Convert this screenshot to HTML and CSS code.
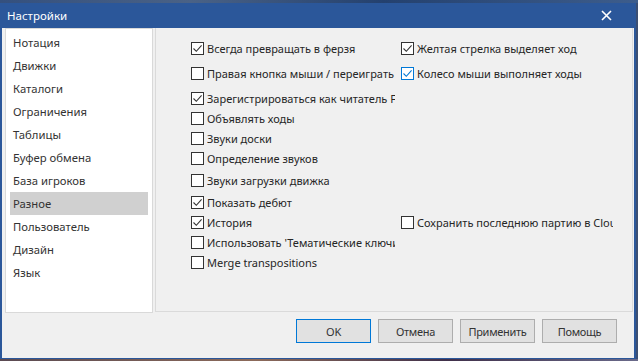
FILE: index.html
```html
<!DOCTYPE html>
<html lang="ru">
<head>
<meta charset="utf-8">
<title>Настройки</title>
<link rel="stylesheet" href="styles.css">
</head>
<body>
<div class="desk-top"></div>
<div class="window">
  <div class="titlebar">
    <span class="title">Настройки</span>
    <svg class="close" width="11" height="11" viewBox="0 0 11 11"><path d="M1 1L10 10M10 1L1 10" stroke="#fff" stroke-width="1.6"/></svg>
  </div>
  <div class="main">
    <ul class="nav">
      <li>Нотация</li>
      <li>Движки</li>
      <li>Каталоги</li>
      <li>Ограничения</li>
      <li>Таблицы</li>
      <li>Буфер обмена</li>
      <li>База игроков</li>
      <li class="sel">Разное</li>
      <li>Пользователь</li>
      <li>Дизайн</li>
      <li>Язык</li>
    </ul>
    <div class="panel">
      <div class="row first">
        <label class="cb on"><span class="box"><svg viewBox="0 0 11 11"><path d="M1.5 5.5L4.3 8.3L9.6 2.4" fill="none" stroke="#333" stroke-width="1.1"/></svg></span><span class="txt">Всегда превращать в ферзя</span></label>
        <label class="cb on c2"><span class="box"><svg viewBox="0 0 11 11"><path d="M1.5 5.5L4.3 8.3L9.6 2.4" fill="none" stroke="#333" stroke-width="1.1"/></svg></span><span class="txt">Желтая стрелка выделяет ход</span></label>
      </div>
      <div class="row g6">
        <label class="cb"><span class="box"></span><span class="txt">Правая кнопка мыши / переиграть</span></label>
        <label class="cb on c2 focus"><span class="box"><svg viewBox="0 0 11 11"><path d="M1.5 5.5L4.3 8.3L9.6 2.4" fill="none" stroke="#0078d7" stroke-width="1.1"/></svg></span><span class="txt">Колесо мыши выполняет ходы</span></label>
      </div>
      <div class="row g6">
        <label class="cb on"><span class="box"><svg viewBox="0 0 11 11"><path d="M1.5 5.5L4.3 8.3L9.6 2.4" fill="none" stroke="#333" stroke-width="1.1"/></svg></span><span class="txt">Зарегистрироваться как читатель Fritz</span></label>
      </div>
      <div class="row g1">
        <label class="cb"><span class="box"></span><span class="txt">Объявлять ходы</span></label>
      </div>
      <div class="row">
        <label class="cb"><span class="box"></span><span class="txt">Звуки доски</span></label>
      </div>
      <div class="row g1">
        <label class="cb"><span class="box"></span><span class="txt">Определение звуков</span></label>
      </div>
      <div class="row g3">
        <label class="cb"><span class="box"></span><span class="txt">Звуки загрузки движка</span></label>
      </div>
      <div class="row g3">
        <label class="cb on"><span class="box"><svg viewBox="0 0 11 11"><path d="M1.5 5.5L4.3 8.3L9.6 2.4" fill="none" stroke="#333" stroke-width="1.1"/></svg></span><span class="txt">Показать дебют</span></label>
      </div>
      <div class="row g1">
        <label class="cb on"><span class="box"><svg viewBox="0 0 11 11"><path d="M1.5 5.5L4.3 8.3L9.6 2.4" fill="none" stroke="#333" stroke-width="1.1"/></svg></span><span class="txt">История</span></label>
        <label class="cb c2"><span class="box"></span><span class="txt">Сохранить последнюю партию в Cloud</span></label>
      </div>
      <div class="row g1">
        <label class="cb"><span class="box"></span><span class="txt">Использовать 'Тематические ключи'</span></label>
      </div>
      <div class="row g1">
        <label class="cb"><span class="box"></span><span class="txt">Merge transpositions</span></label>
      </div>
    </div>
  </div>
  <div class="footer">
    <button class="btn default">OK</button>
    <button class="btn">Отмена</button>
    <button class="btn">Применить</button>
    <button class="btn">Помощь</button>
  </div>
</div>
<div class="desk-bottom"></div>
</body>
</html>
```

FILE: styles.css
```css
* { box-sizing: border-box; }
html, body { margin: 0; padding: 0; }
body {
  width: 638px;
  height: 361px;
  overflow: hidden;
  background: #3b4f73;
  font-family: "Noto Sans", "DejaVu Sans", sans-serif;
  font-size: 11px;
  color: #2b2b2b;
}
.desk-top {
  height: 3px;
  background: linear-gradient(90deg, #34507e 0%, #4a6286 30%, #24416f 60%, #3d5d8c 100%);
}
.window {
  width: 636px;
  height: 356px;
  background: #f0f0f0;
  border-left: 2px solid #2b579a;
  border-right: 2px solid #2b579a;
  border-bottom: 1px solid #2b579a;
  display: flex;
  flex-direction: column;
}
.desk-bottom {
  height: 2px;
  background: linear-gradient(90deg, #5a4a52 0%, #8c6a5a 40%, #40304a 70%, #6a6a8a 100%);
}
.titlebar {
  height: 25px;
  background: #2b579a;
  color: #fff;
  display: flex;
  align-items: center;
  justify-content: space-between;
  padding: 0 22px 0 5px;
}
.title { font-size: 11.5px; }
.close { display: block; }
.main {
  display: flex;
  gap: 2px;
  padding: 0 1px 0 3px;
  height: 285px;
}
.nav {
  list-style: none;
  margin: 0;
  padding: 2px 4px 0 4px;
  width: 148px;
  background: #fff;
  border: 1px solid #d9d9d9;
}
.nav li {
  height: 23px;
  line-height: 23px;
  padding-left: 3px;
  color: #333;
  white-space: nowrap;
  font-size: 11.3px;
}
.nav li.sel { background: #d0d0d0; }
.panel {
  flex: 1;
  border: 1px solid #dadada;
  border-top: none;
  background: #f0f0f0;
  padding: 10px 0 0 35px;
  height: 284px;
}
.row {
  display: flex;
  height: 20px;
  align-items: center;
}
.row.g6 { margin-top: 5px; }
.row.g3 { margin-top: 2px; }
.row.g1 { margin-top: 0; }
.cb {
  display: flex;
  align-items: center;
  width: 210px;
  overflow: hidden;
  white-space: nowrap;
  flex: none;
  color: #262626;
}
.cb .txt { overflow: hidden; width: 188px; display: block; }
.cb.c2 { width: 212px; }
.cb.c2 .txt { width: 197px; }
.box {
  width: 13px;
  height: 13px;
  border: 1px solid #333;
  background: #fff;
  margin-right: 3px;
  flex: none;
  display: flex;
  align-items: center;
  justify-content: center;
}
.box svg { width: 11px; height: 11px; display: block; }
.focus .box { border-color: #0078d7; }
.footer {
  display: flex;
  justify-content: flex-end;
  gap: 7px;
  padding: 6px 17px 0 0;
}
.btn {
  width: 75px;
  height: 24px;
  background: #e1e1e1;
  border: 1px solid #adadad;
  font-family: "Noto Sans", "DejaVu Sans", sans-serif;
  font-size: 11px;
  letter-spacing: -0.3px;
  color: #333;
  padding: 0;
}
.btn.default { border-color: #0078d7; }
```
